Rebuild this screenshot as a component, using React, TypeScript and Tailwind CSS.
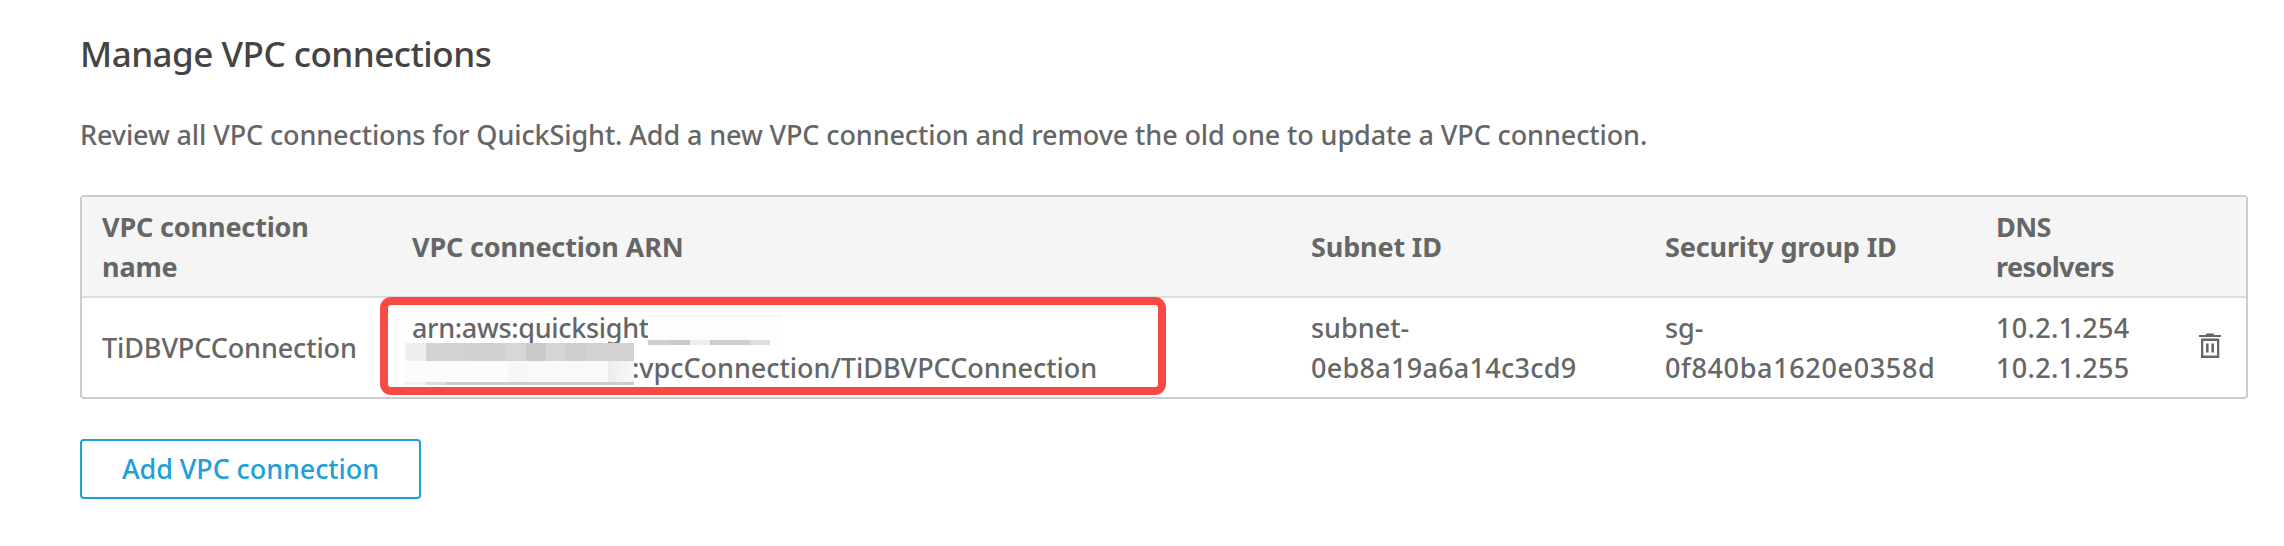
import React from "react";

const regionTiles = [
  "w-[22px] bg-[#cfcfcf]",
  "w-[20px] bg-[#cacaca]",
  "w-[20px] bg-[#eeeeee]",
  "w-[40px] bg-[#cdcdcd]",
  "w-[20px] bg-[#dedede]",
];

const accountTiles = [
  "w-[2px] bg-[#fafafa]",
  "w-[20px] bg-[#eeeeee]",
  "w-[40px] bg-[#d3d3d3]",
  "w-[40px] bg-[#d1d1d1]",
  "w-[20px] bg-[#d7d7d7]",
  "w-[20px] bg-[#cbcbcb]",
  "w-[20px] bg-[#d6d6d6]",
  "w-[20px] bg-[#cecece]",
  "flex-1 bg-[#d2d2d2]",
];

const columns = "grid grid-cols-[310px_899px_354px_331px_203px_1fr] items-center pl-5";

function TrashIcon() {
  return (
    <svg width="22" height="26" viewBox="0 0 22 26" fill="#666" className="-mt-1 block">
      <path d="M0 2h7V0.500h8V2h7v2H0z" />
      <path fillRule="evenodd" d="M2 5.500h18.300V25H2zM4.300 8v14.500H18V8z" />
      <path d="M7 10.500h2.600v9H7zM12.400 10.500h2.600v9h-2.600z" />
    </svg>
  );
}

function RegionMask() {
  return (
    <div className="absolute left-[236px] top-[7px] flex h-[30px] w-[134px] flex-col border-t-2 border-[#f6f6f6] bg-[#fdfdfd]">
      <div className="mt-auto flex h-[5px]">
        {regionTiles.map((tile) => (
          <div key={tile} className={tile} />
        ))}
      </div>
    </div>
  );
}

function AccountMask() {
  return (
    <div className="absolute -left-[8px] top-[35px] flex h-[42px] w-[230px] flex-col">
      <div className="flex h-[18px]">
        {accountTiles.map((tile) => (
          <div key={tile} className={tile} />
        ))}
      </div>
      <div className="flex h-[21px]">
        <div className="w-[104px] bg-[#fcfcfc]" />
        <div className="w-[20px] bg-[#f7f7f7]" />
        <div className="w-[80px] bg-[#f9f9f9]" />
        <div className="flex-1 bg-gradient-to-r from-[#ededed] to-[#f8f8f8]" />
      </div>
      <div className="flex h-[3px]">
        <div className="w-[22px] bg-[#f3f3f3]" />
        <div className="w-[20px] bg-[#dddddd]" />
        <div className="flex-1 bg-[#cccccc]" />
      </div>
    </div>
  );
}

export default function App() {
  return (
    <main className="h-[546px] w-[2284px] overflow-hidden bg-white px-20 pt-[29px] font-['Noto_Sans',sans-serif] text-[27px] font-medium leading-10 text-[#666]">
      <h1 className="text-[35px] font-medium leading-[50px] tracking-[-0.5px] text-[#444]">Manage VPC connections</h1>
      <p className="mt-9 tracking-[-0.11px]">
        Review all VPC connections for QuickSight. Add a new VPC connection and remove the old one to update a VPC connection.
      </p>
      <div className="mt-10 h-[204px] w-[2168px] rounded-[4px] border-2 border-[#ccc]">
        <div className={`${columns} h-[101px] border-b-2 border-[#dcdcdc] bg-[#f5f5f5] font-bold tracking-[-0.15px]`}>
          <div>VPC connection<br />name</div>
          <div>VPC connection ARN</div>
          <div>Subnet ID</div>
          <div>Security group ID</div>
          <div className="tracking-[-0.6px]">DNS<br />resolvers</div>
        </div>
        <div className={`${columns} h-[99px]`}>
          <div className="tracking-[-0.12px]">TiDBVPCConnection</div>
          <div className="relative">
            <div className="tracking-[-0.32px]">arn:aws:quicksight:</div>
            <div className="pl-[220px] tracking-[-0.03px]">:vpcConnection/TiDBVPCConnection</div>
            <RegionMask />
            <AccountMask />
            <div className="absolute -left-8 -top-[11px] h-[98px] w-[786px] rounded-[11px] border-8 border-[#f84a45]" />
          </div>
          <div>subnet-<br /><span className="tracking-[0.28px]">0eb8a19a6a14c3cd9</span></div>
          <div>sg-<br /><span className="tracking-[0.65px]">0f840ba1620e0358d</span></div>
          <div className="tracking-[0.35px]">10.2.1.254<br />10.2.1.255</div>
          <TrashIcon />
        </div>
      </div>
      <button className="mt-10 block h-[60px] w-[341px] rounded-[4px] border-2 border-[#209fd9] tracking-[-0.1px] text-[#209fd9]">
        Add VPC connection
      </button>
    </main>
  );
}
